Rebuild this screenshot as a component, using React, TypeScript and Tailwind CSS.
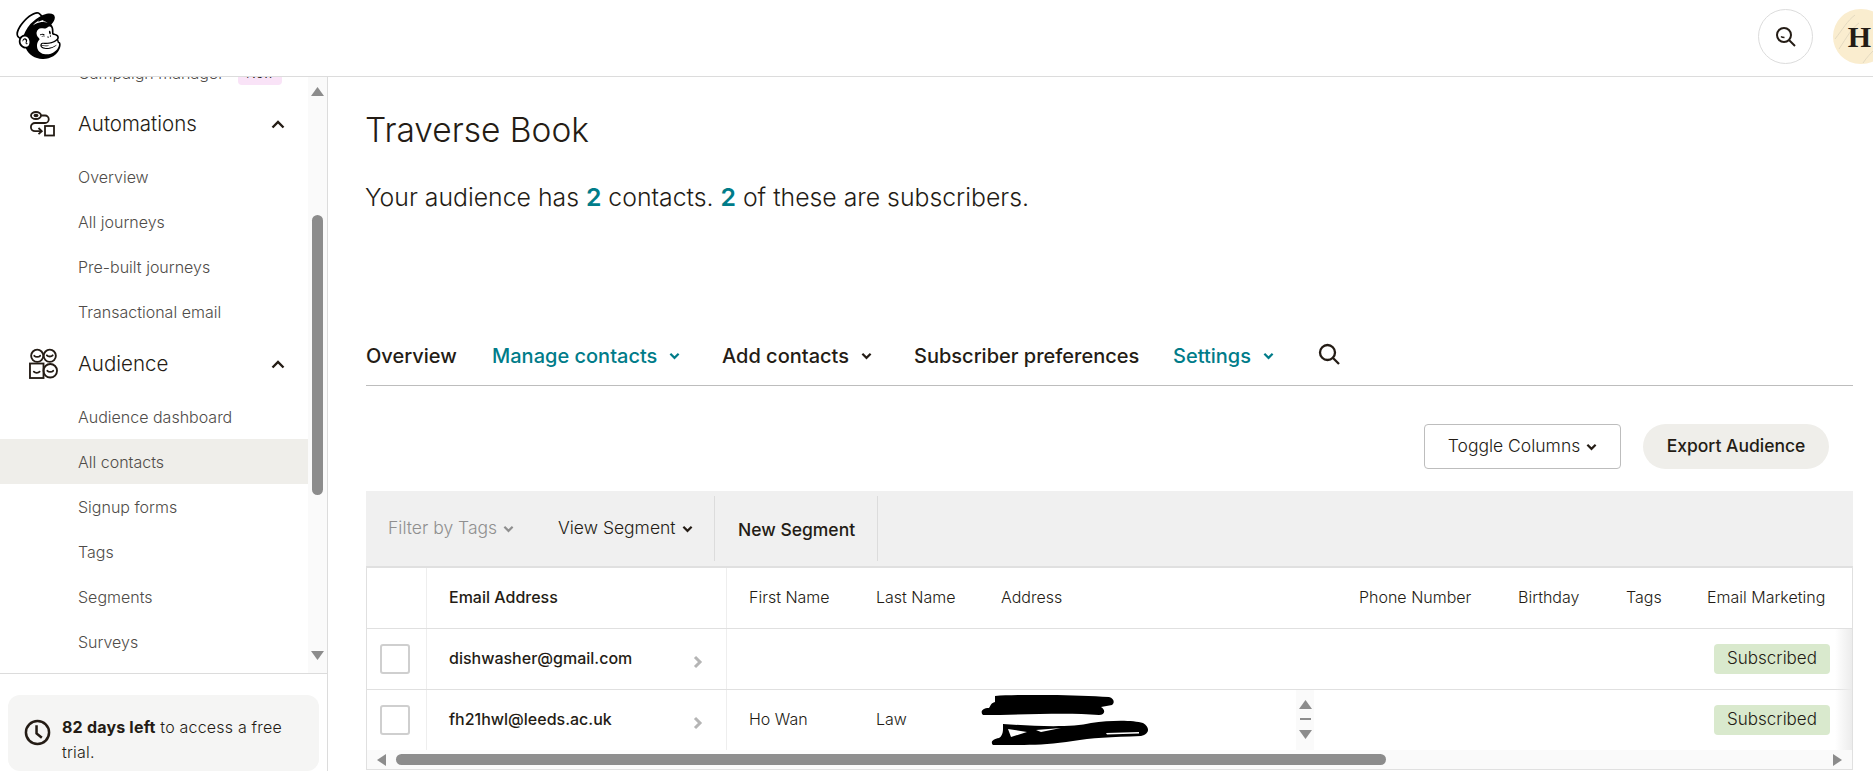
import { SiMailchimp } from "react-icons/si";

const automationLinks = ["Overview", "All journeys", "Pre-built journeys", "Transactional email"];
const audienceLinks = ["Audience dashboard", "All contacts", "Signup forms", "Tags", "Segments", "Surveys"];

const Chevron = ({ className }: { className: string }) => (
  <svg viewBox="0 0 12 8" className={className} fill="none" stroke="currentColor" strokeWidth="2.4">
    <path d="M1.5 1.5 6 6l4.5-4.5" />
  </svg>
);

const ChevronUp = () => (
  <svg viewBox="0 0 14 9" className="w-[14px] h-[9px] text-[#241c15]" fill="none" stroke="currentColor" strokeWidth="2.4">
    <path d="M1.5 7.5 7 2l5.5 5.5" />
  </svg>
);

const Triangle = ({ dir, className }: { dir: "up" | "down" | "left" | "right"; className: string }) => {
  const points = { up: "0,10 6,0 12,10", down: "0,0 12,0 6,10", left: "10,0 10,12 0,6", right: "0,0 0,12 10,6" }[dir];
  const box = dir === "up" || dir === "down" ? "0 0 12 10" : "0 0 10 12";
  return (
    <svg viewBox={box} className={className} fill="#8c8c8c" preserveAspectRatio="none">
      <polygon points={points} />
    </svg>
  );
};

const AutomationsIcon = () => (
  <svg viewBox="0 0 26 26" className="w-[26px] h-[26px] text-[#241c15]" fill="none" stroke="currentColor" strokeWidth="1.8">
    <ellipse cx="7" cy="4.5" rx="5" ry="3.5" />
    <ellipse cx="7" cy="4.5" rx="1.6" ry="0.8" fill="currentColor" />
    <path d="M12 4.5h4a3.6 3.6 0 0 1 0 7.5H6a4 4 0 0 0 0 8.2h6" />
    <path d="m9.5 17 3.3 3.2-3.3 3" />
    <rect x="16" y="15" width="9" height="9.5" />
  </svg>
);

const AudienceIcon = () => (
  <svg viewBox="0 0 30 32" className="w-[29px] h-[32px] text-[#241c15]" fill="none" stroke="currentColor" strokeWidth="1.9" strokeLinecap="round">
    <circle cx="8.5" cy="7.5" r="6.3" />
    <circle cx="21.5" cy="7.5" r="6.3" />
    <rect x="1" y="15.5" width="14" height="15" />
    <circle cx="22" cy="23" r="7" />
    <path d="M5.5 7.5c1.5 1.6 4.5 1.6 6 0M18.5 7c1.5 1.6 4.5 1.6 6 0M5 24c1.5 1.6 4.5 1.6 6 0M19 23c1.5 1.6 4.5 1.6 6 0" />
  </svg>
);

const SideLink = ({ label, active }: { label: string; active?: boolean }) => (
  <div className={`h-[45px] pl-[78px] flex items-center text-[16px] font-light text-[#4f4c49] ${active ? "bg-[#efeeea]" : ""}`}>
    {label}
  </div>
);

const SideHeading = ({ label, icon }: { label: string; icon: React.ReactNode }) => (
  <div className="h-[52px] flex items-center text-[#241c15]">
    <div className="w-[78px] pl-[29px] flex items-center">{icon}</div>
    <span className="flex-1 text-[20.5px] font-light">{label}</span>
    <div className="pr-[23px]">
      <ChevronUp />
    </div>
  </div>
);

const Sidebar = () => (
  <aside className="w-[328px] shrink-0 border-r border-[#dcdcdc] flex flex-col">
    <div className="h-[597px] shrink-0 flex border-b border-[#dcdcdc] overflow-hidden">
      <nav className="flex-1 overflow-hidden">
        <div className="-mt-[18px] h-[27px] pl-[78px] flex items-center gap-[14px] text-[16px] font-light text-[#4f4c49]">
          <span>Campaign manager</span>
          <span className="px-[8px] rounded-[4px] bg-[#f9e3f7] text-[13px] leading-[24px] text-[#241c15]">New</span>
        </div>
        <div className="h-[12px]" />
        <SideHeading label="Automations" icon={<AutomationsIcon />} />
        <div className="h-[4px]" />
        {automationLinks.map((l) => (
          <SideLink key={l} label={l} />
        ))}
        <div className="h-[4px]" />
        <SideHeading label="Audience" icon={<AudienceIcon />} />
        <div className="h-[4px]" />
        {audienceLinks.map((l) => (
          <SideLink key={l} label={l} active={l === "All contacts"} />
        ))}
      </nav>
      <div className="w-[19px] bg-[#fafafa] flex flex-col items-center">
        <div className="h-[138px] pt-[10px]">
          <Triangle dir="up" className="w-[13px] h-[9px]" />
        </div>
        <div className="w-[11px] h-[280px] rounded-full bg-[#8c8c8c]" />
        <div className="flex-1 flex items-end pb-[13px]">
          <Triangle dir="down" className="w-[13px] h-[9px]" />
        </div>
      </div>
    </div>
    <div className="mt-[21px] mx-[8px] h-[100px] rounded-[12px] bg-[#f5f5f4] pt-[20px] pl-[16px] pr-[30px] flex gap-[11px]">
      <svg viewBox="0 0 28 28" className="w-[27px] h-[27px] mt-[4px] shrink-0 text-[#241c15]" fill="none" stroke="currentColor" strokeWidth="2.6">
        <circle cx="14" cy="14" r="12" />
        <path d="M13 6.5V15l5.5 4.5" />
      </svg>
      <p className="text-[16px] leading-[25px] font-light text-[#241c15] tracking-[0.2px]">
        <b className="font-bold">82 days left</b> to access a free trial.
      </p>
    </div>
  </aside>
);

const Tabs = () => (
  <div className="mt-[113px] h-[60px] border-b border-[#bdbdbd] flex items-center text-[20px] font-medium text-[#241c15]">
    <span className="w-[126px]">Overview</span>
    <span className="w-[230px] flex items-center text-[#007c89]">
      Manage contacts
      <Chevron className="w-[11px] h-[8px] ml-[12px]" />
    </span>
    <span className="w-[192px] flex items-center">
      Add contacts
      <Chevron className="w-[11px] h-[8px] ml-[12px]" />
    </span>
    <span className="w-[259px] whitespace-nowrap">Subscriber preferences</span>
    <span className="w-[146px] flex items-center text-[#007c89]">
      Settings
      <Chevron className="w-[11px] h-[8px] ml-[12px]" />
    </span>
    <svg viewBox="0 0 22 22" className="w-[22px] h-[22px] -mt-[4px] -ml-[1px]" fill="none" stroke="#241c15" strokeWidth="2.3">
      <circle cx="9.5" cy="9.5" r="7.5" />
      <path d="m15 15 6 6" />
    </svg>
  </div>
);

const Scribble = () => (
  <svg viewBox="0 0 170 50" className="w-[170px] h-[50px]" fill="#000">
    <path d="M14 1 C40 -1 95 0 128 2 C133 3 134 8 131 10 L120 12 C125 15 124 20 118 20 C85 17 40 20 2 20 C-1 17 1 13 8 13 C10 10 10 8 14 7 Z" />
    <path d="M22 29 C50 31 90 33 110 28 C130 25 152 25 162 28 C169 32 169 39 160 41 C130 42 110 43 92 46 C60 51 35 50 12 50 C9 47 12 44 18 43 C20 42 22 39 22 34 Z" />
    <path d="M27 34 L46 37 L30 42 Z M55 35 L80 33 L60 37 Z M125 38 L158 37 L158 38.5 L126 39.5 Z" fill="#fff" />
  </svg>
);

const Badge = () => (
  <span className="w-[116px] h-[30px] flex items-center justify-center rounded-[4px] bg-[#d9e9cd] text-[17px] font-light text-[#241c15]">
    Subscribed
  </span>
);

const colHeadings = [
  { label: "First Name", w: "w-[126px] pl-[22px]" },
  { label: "Last Name", w: "w-[125px] pl-[23px]" },
  { label: "Address", w: "w-[358px] pl-[23px]" },
  { label: "Phone Number", w: "w-[159px] pl-[23px]" },
  { label: "Birthday", w: "w-[108px] pl-[23px]" },
  { label: "Tags", w: "w-[81px] pl-[23px]" },
  { label: "Email Marketing", w: "w-[168px] pl-[23px]" },
];

const RowChevron = () => (
  <svg viewBox="0 0 10 14" className="w-[10px] h-[14px] mt-[7px]" fill="none" stroke="#b5b5b5" strokeWidth="3">
    <path d="m2 2 5 5-5 5" />
  </svg>
);

const Row = ({ email, first, last, address }: { email: string; first?: string; last?: string; address?: boolean }) => (
  <div className="relative h-[60px] flex text-[16px] font-light text-[#241c15]">
    <div className="w-[60px] border-r border-[#eeeeee] flex items-center pl-[13px]">
      <div className="w-[30px] h-[30px] rounded-[3px] border-2 border-[#cfcfcf] bg-white" />
    </div>
    <div className="w-[300px] border-r border-[#eeeeee] flex items-center justify-between pl-[22px] pr-[23px] pb-[2px]">
      <span className="font-medium">{email}</span>
      <RowChevron />
    </div>
    <div className="w-[126px] pl-[22px] flex items-center pb-[2px]">{first}</div>
    <div className="w-[125px] pl-[23px] flex items-center pb-[2px]">{last}</div>
    <div className="w-[358px] flex items-start">
      {address && (
        <>
          <div className="ml-[3px] w-[315px] pt-[5px]">
            <Scribble />
          </div>
          <div className="w-[18px] h-[60px] bg-[#fafafa] flex flex-col items-center pt-[10px]">
            <Triangle dir="up" className="w-[13px] h-[9px]" />
            <div className="w-[11px] h-[2px] bg-[#8c8c8c] mt-[9px]" />
            <Triangle dir="down" className="w-[13px] h-[9px] mt-[10px]" />
          </div>
        </>
      )}
    </div>
    <div className="w-[159px]" />
    <div className="w-[108px]" />
    <div className="w-[81px]" />
    <div className="w-[168px] pl-[30px] flex items-center">
      <Badge />
    </div>
  </div>
);

const ContactsTable = () => (
  <div className="border-x border-b border-t-2 border-[#e0e0e0] h-[204px] overflow-hidden">
    <div className="relative">
      <div className="h-[61px] border-b border-[#e0e0e0] flex text-[16px] font-light text-[#241c15]">
        <div className="w-[60px] border-r border-[#eeeeee]" />
        <div className="w-[300px] border-r border-[#eeeeee] pl-[22px] pb-[2px] flex items-center font-medium">Email Address</div>
        {colHeadings.map((c) => (
          <div key={c.label} className={`${c.w} pb-[2px] flex items-center whitespace-nowrap`}>
            {c.label}
          </div>
        ))}
      </div>
      <div className="border-b border-[#e0e0e0]">
        <Row email="dishwasher@gmail.com" />
      </div>
      <Row email="fh21hwl@leeds.ac.uk" first="Ho Wan" last="Law" address />
      <div className="absolute right-0 top-[61px] bottom-0 w-[17px] bg-gradient-to-r from-transparent to-[#ececec]" />
    </div>
    <div className="h-[19px] bg-[#fafafa] flex items-center">
      <div className="w-[29px] pl-[10px]">
        <Triangle dir="left" className="w-[9px] h-[12px]" />
      </div>
      <div className="w-[990px] h-[11px] rounded-full bg-[#8c8c8c]" />
      <div className="flex-1 flex justify-end pr-[10px]">
        <Triangle dir="right" className="w-[9px] h-[12px]" />
      </div>
    </div>
  </div>
);

export default function App() {
  return (
    <div className="w-full h-[771px] overflow-hidden bg-white flex flex-col [font-family:Inter,sans-serif]">
      <header className="h-[77px] shrink-0 border-b border-[#dcdcdc] flex items-center justify-between overflow-hidden">
        <SiMailchimp className="ml-[15px] w-[47px] h-[47px] text-black -mt-[5px]" />
        <div className="flex items-center gap-[20px] -mr-[16px] -mt-[3px]">
          <button className="w-[55px] h-[55px] rounded-full border border-[#dcdcdc] flex items-center justify-center">
            <svg viewBox="0 0 22 22" className="w-[22px] h-[22px]" fill="none" stroke="#241c15" strokeWidth="2">
              <circle cx="9" cy="9" r="7" />
              <path d="m14 14 6 6" />
              <path d="M6 10.5c1 1 2 1 3.5 1" strokeWidth="1.5" />
            </svg>
          </button>
          <div className="relative w-[56px] h-[55px] rounded-full bg-[#faedcf] overflow-hidden flex items-center justify-center">
            <svg viewBox="0 0 56 55" className="absolute inset-0 w-full h-full" fill="none" stroke="#e3d9c0" strokeWidth="1">
              <path d="M2 30C10 20 14 12 22 6M6 40C14 28 18 20 26 14M30 54c4-6 8-10 12-14" />
            </svg>
            <span className="relative -ml-[3px] text-[30px] leading-none font-bold text-[#241c15] [font-family:'Liberation_Serif',serif]">H</span>
          </div>
        </div>
      </header>
      <div className="flex-1 flex min-h-0">
        <Sidebar />
        <main className="flex-1 min-w-0 pl-[38px] pr-[20px] pt-[31px]">
          <h1 className="text-[33.5px] leading-[44px] font-light text-[#241c15] -ml-[1px]">Traverse Book</h1>
          <p className="mt-[29px] text-[24.8px] leading-[32px] font-light text-[#241c15] -ml-[1px]">
            Your audience has <b className="font-semibold text-[#007c89]">2</b> contacts.{" "}
            <b className="font-semibold text-[#007c89]">2</b> of these are subscribers.
          </p>
          <Tabs />
          <div className="mt-[38px] flex justify-end gap-[22px] pr-[24px]">
            <button className="w-[197px] h-[45px] rounded-[4px] border border-[#bdbdbd] flex items-center justify-center gap-[6px] text-[17.5px] font-light text-[#241c15]">
              Toggle Columns
              <Chevron className="w-[11px] h-[8px]" />
            </button>
            <button className="w-[186px] h-[45px] rounded-full bg-[#efeeea] text-[17.5px] font-medium text-[#241c15]">
              Export Audience
            </button>
          </div>
          <div className="mt-[22px] h-[75px] bg-[#f0f0f0] flex items-center pl-[22px] text-[17.5px] font-light">
            <span className="w-[170px] flex items-center gap-[6px] text-[#8f8f8f]">
              Filter by Tags
              <Chevron className="w-[11px] h-[8px]" />
            </span>
            <span className="w-[156px] flex items-center gap-[6px] text-[#241c15]">
              View Segment
              <Chevron className="w-[11px] h-[8px]" />
            </span>
            <div className="w-[164px] h-[65px] border-x border-[#dcdcdc] pl-[23px] flex items-center font-medium text-[#241c15] pt-[4px]">
              New Segment
            </div>
          </div>
          <ContactsTable />
        </main>
      </div>
    </div>
  );
}
